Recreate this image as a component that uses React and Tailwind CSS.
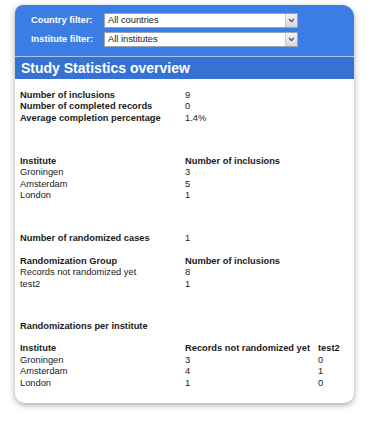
import React from 'react';

const font = { fontFamily: "'Liberation Sans', Arial, sans-serif" };

const Select = ({ value }) => (
  <div className="flex h-[15px] w-[194px] border border-[#9aa4b0] bg-white">
    <div className="flex flex-1 items-center pl-[3px] text-[9.3px] text-[#1a1a1a]">{value}</div>
    <div className="flex w-[12px] items-center justify-center border-l border-[#c9ccd0] bg-gradient-to-b from-[#f4f4f4] to-[#d6d8db]">
      <svg width="7" height="5" viewBox="0 0 7 5">
        <path d="M1 1 L3.5 3.5 L6 1" fill="none" stroke="#555" strokeWidth="1.3" />
      </svg>
    </div>
  </div>
);

const Row = ({ cells, bold }) => (
  <div className={`grid grid-cols-[165px_133px_auto] h-[11.5px] leading-[11.5px] ${bold ? 'font-bold' : ''}`}>
    {cells.map((c, i) => (
      <div key={i} className="whitespace-nowrap">{c}</div>
    ))}
  </div>
);

export default function App() {
  return (
    <div className="min-h-[421px] bg-white pt-[5px] pl-[15px]" style={font}>
      <div className="w-[339px] h-[398px] overflow-hidden rounded-tl-[8px] rounded-tr-[12px] rounded-b-[10px] bg-white shadow-[0_2px_6px_rgba(0,0,0,0.35)]">
        {/* filters */}
        <div className="flex h-[51px] flex-col gap-[4px] bg-[#3b7de4] pt-[8px] pl-[16px]">
          <div className="flex items-center">
            <div className="w-[73px] text-[9.3px] font-bold text-white">Country filter:</div>
            <Select value="All countries" />
          </div>
          <div className="flex items-center">
            <div className="w-[73px] text-[9.3px] font-bold text-white">Institute filter:</div>
            <Select value="All institutes" />
          </div>
        </div>
        <div className="h-[1px] bg-[#a9c4ea]" />
        <div className="flex h-[22px] items-center bg-[#3572d4] pl-[6px] text-[14px] font-bold text-white">
          Study Statistics overview
        </div>

        {/* stats */}
        <div className="pt-[10.5px] pl-[5px] text-[9.3px] text-[#1a1a1a]">
          <Row bold cells={['Number of inclusions', <span className="font-normal">9</span>]} />
          <Row bold cells={['Number of completed records', <span className="font-normal">0</span>]} />
          <Row bold cells={['Average completion percentage', <span className="font-normal">1.4%</span>]} />

          <div className="mt-[31.5px]">
            <Row bold cells={['Institute', 'Number of inclusions']} />
            <Row cells={['Groningen', '3']} />
            <Row cells={['Amsterdam', '5']} />
            <Row cells={['London', '1']} />
          </div>

          <div className="mt-[31px]">
            <Row bold cells={['Number of randomized cases', <span className="font-normal">1</span>]} />
          </div>

          <div className="mt-[11.5px]">
            <Row bold cells={['Randomization Group', 'Number of inclusions']} />
            <Row cells={['Records not randomized yet', '8']} />
            <Row cells={['test2', '1']} />
          </div>

          <div className="mt-[30.5px]">
            <Row bold cells={['Randomizations per institute']} />
          </div>

          <div className="mt-[11px]">
            <Row bold cells={['Institute', 'Records not randomized yet', 'test2']} />
            <Row cells={['Groningen', '3', '0']} />
            <Row cells={['Amsterdam', '4', '1']} />
            <Row cells={['London', '1', '0']} />
          </div>
        </div>
      </div>
    </div>
  );
}
